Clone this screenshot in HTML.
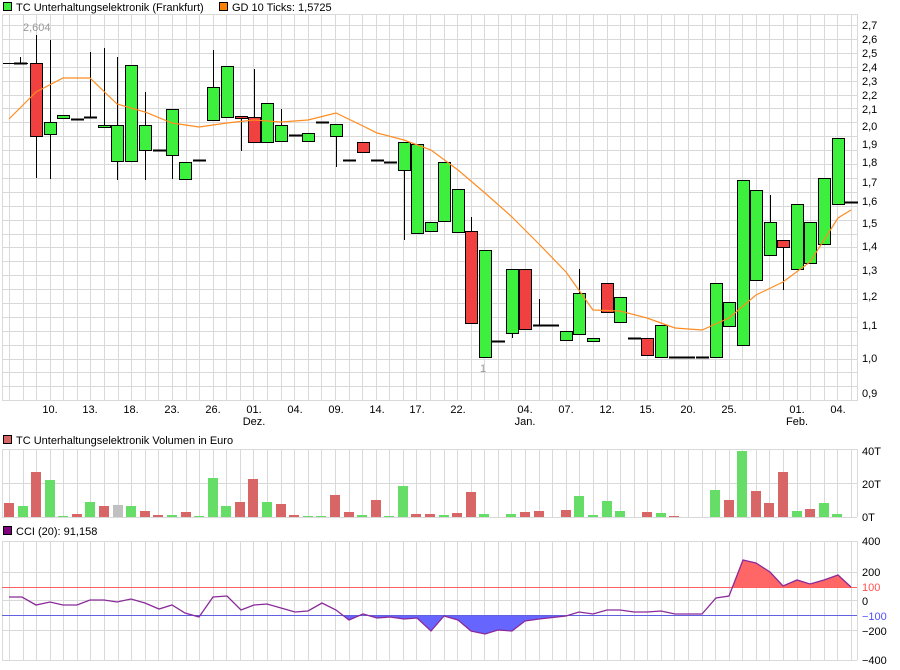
<!DOCTYPE html>
<html><head><meta charset="utf-8"><style>
html,body{margin:0;padding:0;background:#fff;width:900px;height:670px;overflow:hidden}
svg{display:block;font-family:"Liberation Sans",sans-serif;font-size:11px}
</style></head><body>
<svg id="s" width="900" height="670" viewBox="0 0 900 670" xmlns="http://www.w3.org/2000/svg">
<defs>
<clipPath id="cr"><rect x="0" y="540" width="860" height="47"/></clipPath>
<clipPath id="cb"><rect x="0" y="615" width="860" height="50"/></clipPath>
</defs>
<g id="grid" stroke="#d9d9d9" stroke-width="1" shape-rendering="crispEdges"></g>
<g id="main"></g>
<!-- legends -->
<rect x="3.5" y="2.5" width="8" height="8" fill="#3ef03e" stroke="#000"/>
<text x="16" y="11">TC Unterhaltungselektronik (Frankfurt)</text>
<rect x="219.5" y="2.5" width="8" height="8" fill="#ff7f00" stroke="#000"/>
<text x="232" y="11">GD 10 Ticks: 1,5725</text>
<text x="23" y="31" fill="#999">2,604</text>
<text x="480" y="372" fill="#999">1</text>
<rect x="3.5" y="435.5" width="8" height="8" fill="#d96666" stroke="#000"/>
<text x="16" y="444">TC Unterhaltungselektronik Volumen in Euro</text>
<rect x="3.5" y="526.5" width="8" height="8" fill="#800080" stroke="#000"/>
<text x="16" y="535">CCI (20): 91,158</text>
<!-- price axis labels -->
<g font-size="11">
<text x="862" y="29">2,7</text><text x="862" y="43">2,6</text><text x="862" y="57">2,5</text><text x="862" y="71">2,4</text><text x="862" y="85">2,3</text><text x="862" y="99">2,2</text><text x="862" y="113">2,1</text><text x="862" y="130">2,0</text><text x="862" y="148">1,9</text><text x="862" y="166">1,8</text><text x="862" y="186">1,7</text><text x="862" y="205">1,6</text><text x="862" y="227">1,5</text><text x="862" y="250">1,4</text><text x="862" y="274">1,3</text><text x="862" y="300">1,2</text><text x="862" y="329">1,1</text><text x="862" y="362">1,0</text><text x="862" y="397">0,9</text>
<text x="862" y="455">40T</text><text x="862" y="488">20T</text><text x="862" y="521">0T</text>
<text x="862" y="545">400</text><text x="862" y="576">200</text><text x="862" y="591" fill="#ff5050">100</text><text x="862" y="605">0</text><text x="862" y="620" fill="#5050ff">−100</text><text x="862" y="635">−200</text><text x="862" y="664">−400</text>
</g>
<g text-anchor="middle">
<text x="50" y="413">10.</text><text x="90" y="413">13.</text><text x="131" y="413">18.</text><text x="172" y="413">23.</text><text x="213" y="413">26.</text><text x="254" y="413">01.</text><text x="254" y="425">Dez.</text><text x="295" y="413">04.</text><text x="336" y="413">09.</text><text x="377" y="413">14.</text><text x="417" y="413">17.</text><text x="458" y="413">22.</text><text x="525" y="413">04.</text><text x="525" y="425">Jan.</text><text x="566" y="413">07.</text><text x="607" y="413">12.</text><text x="647" y="413">15.</text><text x="688" y="413">20.</text><text x="729" y="413">25.</text><text x="797" y="413">01.</text><text x="797" y="425">Feb.</text><text x="838" y="413">04.</text>
</g>
</svg>
<script>
var NS="http://www.w3.org/2000/svg",g=document.getElementById('grid'),m=document.getElementById('main');
function el(p,t,a){var e=document.createElementNS(NS,t);for(var k in a)e.setAttribute(k,a[k]);p.appendChild(e);return e;}
var L=2,R=857;
// vertical grid
[[14,401],[449,517],[541,660]].forEach(function(p){for(var x=9;x<R;x+=13.58){var xx=Math.round(x)+.5;el(g,'line',{x1:xx,y1:p[0],x2:xx,y2:p[1]});}
el(g,'line',{x1:L+.5,y1:p[0],x2:L+.5,y2:p[1]});el(g,'line',{x1:R+.5,y1:p[0],x2:R+.5,y2:p[1]});});
for(var y=25;y<400;y+=13.9){var yy=Math.round(y)+.5;el(g,'line',{x1:L,y1:yy,x2:R,y2:yy});}
el(g,'line',{x1:L,y1:14.5,x2:R,y2:14.5});el(g,'line',{x1:L,y1:400.5,x2:R,y2:400.5});
[449.5,483.5,517.5,541.5,572.5,600.5,630.5,660.5].forEach(function(y){el(g,'line',{x1:L,y1:y,x2:R,y2:y});});
// candles: x, top, bottom, wickTop, wickBot, color(g/r/l)
var C=[[20,63,63,57,63,'l'],[36,63,136,35,178,'r'],[50,122,134,40,179,'g'],[63,115,118,115,118,'g'],[77,119,119,119,119,'l'],[90,117,117,52,117,'l'],[104,125,127,48,127,'g'],[117,125,161,57,180,'g'],[131,65,161,65,161,'g'],[145,125,150,92,180,'g'],[159,150,150,150,150,'l'],[172,109,155,109,179,'g'],[185,162,179,162,179,'g'],[199,160,160,160,160,'l'],[213,87,120,50,120,'g'],[227,66,117,66,117,'g'],[241,116,118,116,151,'r'],[254,117,142,69,142,'r'],[267,103,142,103,142,'g'],[281,125,141,109,141,'g'],[295,135,135,135,135,'l'],[308,133,141,133,141,'g'],[322,122,122,122,122,'l'],[336,124,136,124,167,'g'],[349,160,160,160,160,'l'],[363,142,152,142,152,'r'],[377,160,160,160,160,'l'],[390,162,162,162,162,'l'],[404,142,170,142,240,'g'],[417,144,233,144,233,'g'],[431,222,231,222,231,'g'],[444,162,221,162,221,'g'],[458,189,232,189,232,'g'],[471,231,323,217,323,'r'],[485,250,357,250,357,'g'],[498,341,341,341,341,'l'],[512,269,333,269,338,'g'],[525,269,329,269,329,'r'],[539,325,325,299,325,'l'],[552,325,325,325,325,'l'],[566,331,340,331,340,'g'],[579,293,334,269,334,'g'],[593,338,341,338,341,'g'],[607,283,312,283,312,'r'],[620,297,322,297,322,'g'],[634,338,338,338,338,'l'],[647,338,355,338,355,'r'],[661,325,357,325,357,'g'],[675,357,357,357,357,'l'],[688,357,357,357,357,'l'],[702,357,357,357,357,'l'],[716,283,357,283,357,'g'],[729,302,326,302,326,'g'],[743,180,345,180,345,'g'],[756,190,280,190,280,'g'],[770,222,255,195,255,'g'],[783,240,247,240,290,'r'],[797,204,269,204,269,'g'],[810,222,263,222,263,'g'],[824,178,244,178,244,'g'],[838,138,204,138,204,'g'],[851,202,202,202,202,'l']];
el(m,'line',{x1:3,y1:63.5,x2:28,y2:63.5,stroke:'#000'});
C.forEach(function(c){var x=c[0];el(m,'line',{x1:x+.5,y1:c[3],x2:x+.5,y2:c[4],stroke:'#000'});
if(c[5]=='l'){el(m,'line',{x1:x-6,y1:c[1]+.5,x2:x+7,y2:c[1]+.5,stroke:'#000','stroke-width':2});}
else el(m,'rect',{x:x-5.5,y:c[1]+.5,width:12,height:Math.max(2,c[2]-c[1]),fill:c[5]=='g'?'#3ef03e':'#f04040',stroke:'#000'});});
var ma="9,119 36,92 63,78 90,78 117,104 145,112 172,123 199,127 227,123 254,120 281,122 308,120 336,113 363,126 377,133 404,140 431,150 458,170 485,193 512,217 539,244 566,272 593,310 620,311 647,318 675,328 702,330 729,318 756,295 783,282 810,262 838,218 851,210";
el(m,'polyline',{points:ma,fill:'none',stroke:'#ff8c20','stroke-width':1.2});
// volume
var V=[[14,'r'],[11,'g'],[45,'r'],[37,'g'],[1,'g'],[3,'r'],[15,'g'],[11,'r'],[12,'y'],[11,'g'],[6,'r'],[2,'r'],[2,'g'],[5,'r'],[1,'g'],[39,'g'],[11,'g'],[15,'r'],[38,'r'],[15,'g'],[13,'r'],[2,'r'],[1,'g'],[1,'g'],[22,'r'],[5,'r'],[2,'g'],[17,'r'],[1,'g'],[31,'g'],[3,'r'],[3,'r'],[2,'g'],[4,'r'],[25,'r'],[3,'g'],[0,'g'],[3,'g'],[5,'r'],[6,'r'],[0,'g'],[7,'r'],[21,'g'],[2,'g'],[16,'g'],[6,'g'],[0,'g'],[5,'r'],[4,'g'],[1,'r'],[0,'g'],[0,'g'],[27,'g'],[17,'r'],[66,'g'],[26,'r'],[14,'r'],[45,'r'],[6,'g'],[8,'r'],[14,'g'],[3,'g']];
V.forEach(function(v,i){if(!v[0])return;var x=9+i*13.58;el(m,'rect',{x:Math.round(x)-5,y:517-v[0],width:10,height:v[0],fill:v[1]=='g'?'#66dd66':v[1]=='r'?'#d96666':'#c0c0c0'});});
// CCI
var P="9,597 22,597 36,605 50,602 63,605 77,605 90,600 104,600 117,602 131,599 145,603 159,609 172,605 185,613 199,617 213,597 227,596 241,610 254,605 267,604 281,608 295,612 308,611 322,603 336,610 349,620 363,614 377,618 390,617 404,619 417,618 431,631 444,616 458,620 471,631 485,634 498,630 512,631 525,621 539,619 566,616 579,612 593,614 607,610 620,610 634,612 647,612 661,611 675,614 688,614 702,614 716,598 729,596 743,560 756,563 770,572 783,586 797,580 810,584 824,580 838,575 851,587";
el(m,'polygon',{points:"9,587 "+P+" 851,587",fill:'#ff6666','clip-path':'url(#cr)'});
el(m,'polygon',{points:"9,616 "+P+" 851,616",fill:'#6666ff','clip-path':'url(#cb)'});
el(m,'line',{x1:2,y1:587.5,x2:857,y2:587.5,stroke:'#ff6060'});
el(m,'line',{x1:2,y1:615.5,x2:857,y2:615.5,stroke:'#6060e0'});
el(m,'polyline',{points:P,fill:'none',stroke:'#8a2a9a','stroke-width':1.3});
</script>
</body></html>
